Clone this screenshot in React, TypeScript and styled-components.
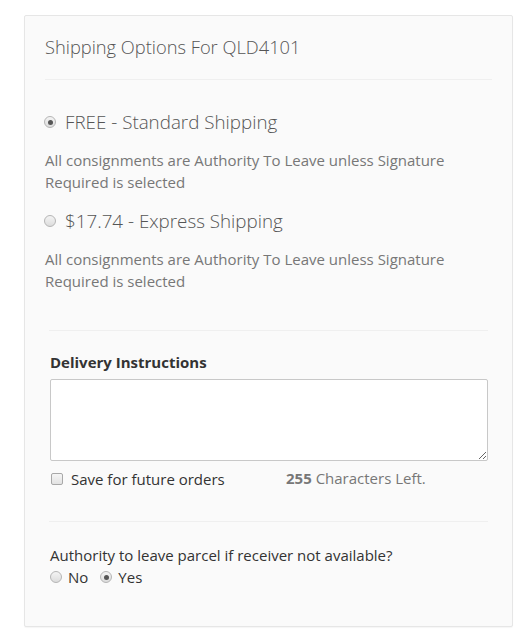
import styled, { createGlobalStyle } from 'styled-components';

const GlobalStyle = createGlobalStyle`
    html, body {
        margin: 0;
        padding: 0;
        background: #ffffff;
    }
    body {
        font-family: "Open Sans", "Noto Sans", sans-serif;
        color: #555555;
    }
    * {
        box-sizing: border-box;
    }
`;

export default function App() {
    return (
        <>
            <GlobalStyle />
            <Page>
                <Panel>
                    <Heading>Shipping Options For QLD4101</Heading>
                    <Rule $top={21} />

                    <ShippingOption>
                        <OptionLabel>
                            <Radio type="radio" name="shipping" defaultChecked />
                            FREE - Standard Shipping
                        </OptionLabel>
                        <OptionNote>
                            All consignments are Authority To Leave unless Signature Required is selected
                        </OptionNote>
                    </ShippingOption>

                    <ShippingOption>
                        <OptionLabel>
                            <Radio type="radio" name="shipping" />
                            $17.74 - Express Shipping
                        </OptionLabel>
                        <OptionNote>
                            All consignments are Authority To Leave unless Signature Required is selected
                        </OptionNote>
                    </ShippingOption>

                    <Rule $top={38} $inset />

                    <Section>
                        <FieldLabel htmlFor="instructions">Delivery Instructions</FieldLabel>
                        <Instructions id="instructions" maxLength={255} />
                        <FieldFooter>
                            <CheckLabel>
                                <Checkbox type="checkbox" />
                                Save for future orders
                            </CheckLabel>
                            <Counter>
                                <strong>255</strong> Characters Left.
                            </Counter>
                        </FieldFooter>
                    </Section>

                    <Rule $inset />

                    <Section>
                        <Question>Authority to leave parcel if receiver not available?</Question>
                        <RadioGroup>
                            <SmallRadioLabel>
                                <Radio type="radio" name="atl" />
                                No
                            </SmallRadioLabel>
                            <SmallRadioLabel>
                                <Radio type="radio" name="atl" defaultChecked />
                                Yes
                            </SmallRadioLabel>
                        </RadioGroup>
                    </Section>
                </Panel>
            </Page>
        </>
    );
}

// Styled Components
const Page = styled.div`
    padding: 15px 17px 12px 24px;
`;

const Panel = styled.div`
    width: 489px;
    height: 612px;
    background-color: #fafafa;
    border: 1px solid #e6e6e6;
    border-radius: 2px;
    box-shadow: 0 1px 1px rgba(0, 0, 0, 0.04);
    padding: 20px 20px 0 20px;
`;

const Heading = styled.h3`
    margin: 0;
    font-size: 18.3px;
    font-weight: 300;
    line-height: 22px;
    color: #555555;
`;

const Rule = styled.hr<{ $inset?: boolean; $top?: number }>`
    border: none;
    border-top: 1px solid #efefef;
    margin: ${(p) => `${p.$top ?? 0}px ${p.$inset ? '4px' : '0'} 0 ${p.$inset ? '4px' : '0'}`};
    height: 0;
`;

const ShippingOption = styled.div`
    &:first-of-type {
        margin-top: 31px;
    }
`;

const OptionLabel = styled.label`
    display: flex;
    align-items: center;
    gap: 9px;
    margin-left: -1px;
    font-size: 18.8px;
    font-weight: 300;
    line-height: 22px;
    color: #555555;
    cursor: pointer;
`;

const OptionNote = styled.p`
    margin: 16px 0 17px 0;
    font-size: 15px;
    line-height: 22px;
    color: #777777;
    max-width: 420px;
`;

const Radio = styled.input`
    appearance: none;
    margin: 0;
    flex: none;
    width: 12px;
    height: 12px;
    border-radius: 50%;
    border: 1px solid #b5b5b5;
    background: linear-gradient(#f4f4f4, #dcdcdc);
    position: relative;
    cursor: pointer;

    &:checked::after {
        content: '';
        position: absolute;
        left: 2.5px;
        top: 2.5px;
        width: 5px;
        height: 5px;
        border-radius: 50%;
        background: #555555;
    }
`;

const Section = styled.div`
    padding: 0 4px 0 5px;
`;

const FieldLabel = styled.label`
    display: block;
    margin-top: 21px;
    font-size: 15px;
    font-weight: 700;
    line-height: 20px;
    color: #333333;
`;

const Instructions = styled.textarea`
    display: block;
    width: 100%;
    height: 82px;
    margin-top: 7px;
    border: 1px solid #c8c8c8;
    border-radius: 2px;
    background: #ffffff;
    font-family: inherit;
    font-size: 14px;
    resize: vertical;
`;

const FieldFooter = styled.div`
    display: flex;
    align-items: flex-start;
    margin-top: 7px;
    margin-bottom: 32px;
`;

const CheckLabel = styled.label`
    display: flex;
    align-items: center;
    gap: 8px;
    width: 236px;
    margin-top: 1px;
    font-size: 15px;
    line-height: 20px;
    color: #333333;
`;

const Checkbox = styled.input`
    appearance: none;
    margin: 0 0 0 1px;
    width: 12px;
    height: 12px;
    border: 1px solid #a8a8a8;
    border-radius: 2px;
    background: linear-gradient(#f5f5f5, #e2e2e2);
`;

const Counter = styled.div`
    font-size: 15px;
    line-height: 20px;
    color: #777777;

    strong {
        font-weight: 700;
    }
`;

const Question = styled.div`
    margin-top: 23px;
    font-size: 15px;
    line-height: 20px;
    color: #333333;
`;

const RadioGroup = styled.div`
    display: flex;
    gap: 12px;
    margin-top: 2px;
`;

const SmallRadioLabel = styled.label`
    display: flex;
    align-items: center;
    gap: 6px;
    font-size: 15px;
    line-height: 20px;
    color: #333333;
`;
